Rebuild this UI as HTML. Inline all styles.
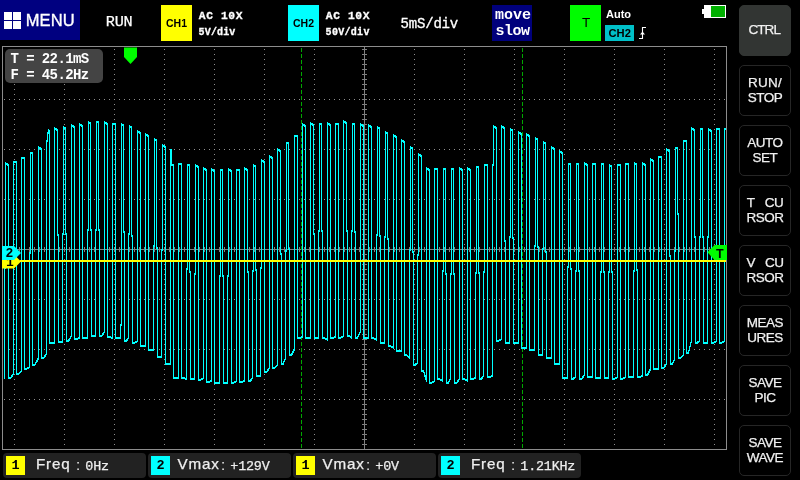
<!DOCTYPE html>
<html><head><meta charset="utf-8"><title>Scope</title>
<style>
html,body{margin:0;padding:0;background:#000;}
body{width:800px;height:480px;position:relative;overflow:hidden;font-family:"Liberation Sans",sans-serif;color:#fff;}
.abs{position:absolute;white-space:pre;line-height:1;}
.mono{font-family:"Liberation Mono",monospace;}
.menu{position:absolute;left:0;top:0;width:80px;height:40px;background:#000080;}
.menu i{position:absolute;width:8px;height:8px;background:#fff;}
.chbox{position:absolute;top:5px;height:35.5px;width:31px;}
.btn{position:absolute;left:739px;width:50px;height:49px;border:1px solid #262626;border-radius:5px;background:#000;display:flex;align-items:center;justify-content:center;text-align:center;font-size:13.5px;line-height:15px;color:#f0f0f0;letter-spacing:-0.5px;-webkit-text-stroke:0.25px #f0f0f0}
.btn.first{background:#323533;border-color:#323533;}
.btn span{display:block;position:relative;top:-0.7px}
.mbox{position:absolute;top:453px;width:142.5px;height:24.5px;background:#222;border-radius:4px;}
.sq{position:absolute;left:3px;top:3px;width:19px;height:19px;color:#000;font-family:"Liberation Mono",monospace;font-weight:bold;font-size:13.5px;line-height:19px;text-align:center;}
.sq.y{background:#ffff00}.sq.c{background:#00ffff}
.lab{position:absolute;top:2.2px;font-size:15.2px;line-height:17px;letter-spacing:0.8px;color:#eee;white-space:pre;-webkit-text-stroke:0.25px #eee}
.colon{position:absolute;left:73px;top:3px;font-size:15px;line-height:17px;color:#eee}
.val{position:absolute;left:82.3px;top:6px;font-family:"Liberation Mono",monospace;font-size:13.4px;letter-spacing:-0.2px;line-height:15px;color:#eee;white-space:pre;-webkit-text-stroke:0.25px #eee}
</style></head><body><div id="root" style="position:absolute;left:0;top:0;width:800px;height:480px;will-change:transform">
<svg width="800" height="480" viewBox="0 0 800 480" style="position:absolute;left:0;top:0">
<rect x="2.5" y="46.5" width="724" height="403" fill="none" stroke="#8c8c8c" stroke-width="1" shape-rendering="crispEdges"/>
<g stroke="#909090" stroke-width="1" stroke-dasharray="1 4" shape-rendering="crispEdges"><line x1="14.5" y1="49" x2="14.5" y2="445" /><line x1="64.5" y1="49" x2="64.5" y2="445" /><line x1="114.5" y1="49" x2="114.5" y2="445" /><line x1="164.5" y1="49" x2="164.5" y2="445" /><line x1="214.5" y1="49" x2="214.5" y2="445" /><line x1="264.5" y1="49" x2="264.5" y2="445" /><line x1="314.5" y1="49" x2="314.5" y2="445" /><line x1="414.5" y1="49" x2="414.5" y2="445" /><line x1="464.5" y1="49" x2="464.5" y2="445" /><line x1="514.5" y1="49" x2="514.5" y2="445" /><line x1="564.5" y1="49" x2="564.5" y2="445" /><line x1="614.5" y1="49" x2="614.5" y2="445" /><line x1="664.5" y1="49" x2="664.5" y2="445" /><line x1="714.5" y1="49" x2="714.5" y2="445" /><line x1="4" y1="99.5" x2="725" y2="99.5" /><line x1="4" y1="149.5" x2="725" y2="149.5" /><line x1="4" y1="199.5" x2="725" y2="199.5" /><line x1="4" y1="299.5" x2="725" y2="299.5" /><line x1="4" y1="349.5" x2="725" y2="349.5" /><line x1="4" y1="399.5" x2="725" y2="399.5" /></g>
<g stroke="#808080" stroke-width="1" shape-rendering="crispEdges">
<line x1="364.5" y1="47" x2="364.5" y2="449"/><line x1="3" y1="249.5" x2="726" y2="249.5"/>
</g>
<g stroke="#808080" stroke-width="5" stroke-dasharray="1 4" shape-rendering="crispEdges">
<line x1="364.5" y1="49" x2="364.5" y2="445"/><line x1="4" y1="249.5" x2="725" y2="249.5"/>
</g>
<g stroke="#00a800" stroke-width="1" stroke-dasharray="4 2" shape-rendering="crispEdges">
<line x1="301.5" y1="48" x2="301.5" y2="449"/><line x1="522.5" y1="48" x2="522.5" y2="449"/></g>
<path id="w" d="M4.5,377.5 L4.5,267.5 L5.5,267.5 L5.5,162.5 L6.5,163.5 L8.5,164.5 L8.5,377.5 L10.5,377.5 L13.5,373.5 L13.5,373.5 L13.5,161.5 L16.5,161.5 L16.5,373.5 L18.5,373.5 L21.5,370.5 L21.5,370.5 L21.5,157.5 L24.5,157.5 L24.5,368.5 L26.5,368.5 L29.5,366.5 L29.5,366.5 L29.5,252.5 L30.5,252.5 L30.5,152.5 L32.5,152.5 L32.5,364.5 L34.9,364.5 L38.5,357.5 L38.5,357.5 L38.5,146.5 L39.5,147.5 L41.5,148.5 L41.5,357.5 L43.5,357.5 L46.5,353.5 L46.5,353.5 L46.5,140.5 L47.5,140.5 L47.5,132.5 L48.5,132.5 L48.5,129.5 L48.5,129.5 L49.5,130.5 L49.5,131.5 L49.5,342.5 L54.5,342.5 L54.5,342.5 L54.5,127.5 L55.5,128.5 L57.5,129.5 L57.5,234.5 L58.5,234.5 L58.5,341.5 L62.5,341.5 L62.5,341.5 L62.5,233.5 L63.5,233.5 L63.5,126.5 L64.5,127.5 L65.5,127.5 L65.5,233.5 L66.5,233.5 L66.5,340.5 L68.5,340.5 L71.5,335.5 L71.5,335.5 L71.5,124.5 L72.5,125.5 L74.5,126.5 L74.5,338.5 L76.5,338.5 L79.5,337.5 L79.5,337.5 L79.5,123.5 L80.5,124.5 L82.5,125.5 L82.5,337.5 L87.5,337.5 L87.5,337.5 L87.5,229.5 L88.5,229.5 L88.5,121.5 L89.5,122.5 L90.5,122.5 L90.5,229.5 L91.5,229.5 L91.5,335.5 L95.5,335.5 L95.5,335.5 L95.5,229.5 L96.5,229.5 L96.5,121.5 L98.5,121.5 L98.5,229.5 L99.5,229.5 L99.5,335.5 L101.5,335.5 L104.5,331.5 L104.5,331.5 L104.5,121.5 L105.5,122.5 L107.5,123.5 L107.5,336.5 L109.5,336.5 L112.5,337.5 L112.5,337.5 L112.5,123.5 L115.5,123.5 L115.5,337.5 L120.5,337.5 L120.5,337.5 L120.5,324.5 L121.5,324.5 L121.5,123.5 L122.5,124.5 L123.5,124.5 L123.5,231.5 L124.5,231.5 L124.5,340.5 L126.1,340.5 L128.5,337.5 L128.5,337.5 L128.5,233.5 L129.5,233.5 L129.5,125.5 L130.5,126.5 L131.5,126.5 L131.5,235.5 L132.5,235.5 L132.5,342.5 L134.5,342.5 L137.5,340.5 L137.5,340.5 L137.5,130.5 L138.5,131.5 L140.5,132.5 L140.5,345.5 L145.5,345.5 L145.5,345.5 L145.5,133.5 L146.5,134.5 L148.5,135.5 L148.5,349.5 L153.5,349.5 L153.5,349.5 L153.5,245.5 L154.5,245.5 L154.5,138.5 L155.5,139.5 L156.5,139.5 L156.5,247.5 L157.5,247.5 L157.5,356.5 L161.5,356.5 L161.5,356.5 L161.5,249.5 L162.5,249.5 L162.5,144.5 L163.5,145.5 L165.5,146.5 L165.5,363.5 L170.5,363.5 L170.5,363.5 L170.5,149.5 L171.5,149.5 L171.5,164.5 L173.5,164.5 L173.5,377.5 L178.5,377.5 L178.5,377.5 L178.5,163.5 L181.5,163.5 L181.5,377.5 L183.5,377.5 L186.5,378.5 L186.5,378.5 L186.5,268.5 L187.5,268.5 L187.5,164.5 L189.5,164.5 L189.5,271.5 L190.5,271.5 L190.5,378.5 L194.5,378.5 L194.5,378.5 L194.5,273.5 L195.5,273.5 L195.5,164.5 L196.5,165.5 L198.5,166.5 L198.5,379.5 L200.5,379.5 L203.5,377.5 L203.5,377.5 L203.5,167.5 L204.5,168.5 L206.5,169.5 L206.5,381.5 L208.5,381.5 L211.5,380.5 L211.5,380.5 L211.5,168.5 L212.5,169.5 L214.5,170.5 L214.5,382.5 L219.5,382.5 L219.5,382.5 L219.5,275.5 L220.5,275.5 L220.5,169.5 L222.5,169.5 L222.5,275.5 L223.5,275.5 L223.5,382.5 L227.5,382.5 L227.5,382.5 L227.5,275.5 L228.5,275.5 L228.5,168.5 L229.5,169.5 L231.5,170.5 L231.5,382.5 L233.5,382.5 L236.5,380.5 L236.5,380.5 L236.5,169.5 L239.5,169.5 L239.5,381.5 L241.5,381.5 L244.5,380.5 L244.5,380.5 L244.5,167.5 L245.5,168.5 L247.5,169.5 L247.5,271.5 L248.5,271.5 L248.5,380.5 L250.1,380.5 L252.5,377.5 L252.5,377.5 L252.5,270.5 L253.5,270.5 L253.5,164.5 L254.5,165.5 L255.5,165.5 L255.5,269.5 L256.5,269.5 L256.5,375.5 L260.5,375.5 L260.5,375.5 L260.5,267.5 L261.5,267.5 L261.5,159.5 L262.5,160.5 L264.5,161.5 L264.5,371.5 L266.5,371.5 L269.5,367.5 L269.5,367.5 L269.5,155.5 L270.5,156.5 L272.5,157.5 L272.5,367.5 L274.5,367.5 L277.5,364.5 L277.5,364.5 L277.5,148.5 L278.5,149.5 L280.5,150.5 L280.5,253.5 L281.5,253.5 L281.5,363.5 L283.1,363.5 L285.5,357.5 L285.5,357.5 L285.5,250.5 L286.5,250.5 L286.5,142.5 L288.5,142.5 L288.5,248.5 L289.5,248.5 L289.5,354.5 L291.5,354.5 L294.5,348.5 L294.5,348.5 L294.5,135.5 L297.5,135.5 L297.5,337.5 L299.5,337.5 L302.5,336.5 L302.5,336.5 L302.5,123.5 L303.5,124.5 L305.5,125.5 L305.5,337.5 L310.5,337.5 L310.5,337.5 L310.5,122.5 L311.5,123.5 L313.5,124.5 L313.5,233.5 L314.5,233.5 L314.5,337.5 L318.5,337.5 L318.5,337.5 L318.5,230.5 L319.5,230.5 L319.5,123.5 L321.5,123.5 L321.5,230.5 L322.5,230.5 L322.5,337.5 L324.5,337.5 L327.5,339.5 L327.5,339.5 L327.5,122.5 L328.5,123.5 L330.5,124.5 L330.5,337.5 L332.5,337.5 L335.5,336.5 L335.5,336.5 L335.5,123.5 L338.5,123.5 L338.5,337.5 L340.5,337.5 L343.5,335.5 L343.5,335.5 L343.5,120.5 L344.5,121.5 L346.5,122.5 L346.5,230.5 L347.5,230.5 L347.5,335.5 L349.1,335.5 L351.5,337.5 L351.5,337.5 L351.5,230.5 L352.5,230.5 L352.5,123.5 L354.5,123.5 L354.5,231.5 L355.5,231.5 L355.5,337.5 L357.5,337.5 L360.5,330.5 L360.5,330.5 L360.5,123.5 L361.5,124.5 L363.5,125.5 L363.5,337.5 L368.5,337.5 L368.5,337.5 L368.5,124.5 L369.5,125.5 L371.5,126.5 L371.5,337.5 L373.5,337.5 L376.5,339.5 L376.5,339.5 L376.5,234.5 L377.5,234.5 L377.5,126.5 L378.5,127.5 L379.5,127.5 L379.5,235.5 L380.5,235.5 L380.5,342.5 L384.5,342.5 L384.5,342.5 L384.5,236.5 L385.5,236.5 L385.5,131.5 L386.5,132.5 L387.5,132.5 L387.5,238.5 L388.5,238.5 L388.5,345.5 L390.5,345.5 L393.5,347.5 L393.5,347.5 L393.5,134.5 L394.5,135.5 L396.5,136.5 L396.5,350.5 L401.5,350.5 L401.5,350.5 L401.5,139.5 L402.5,140.5 L404.5,141.5 L404.5,354.5 L406.5,354.5 L409.5,357.5 L409.5,357.5 L409.5,249.5 L410.5,249.5 L410.5,146.5 L411.5,147.5 L412.5,147.5 L412.5,251.5 L413.5,251.5 L413.5,364.5 L415.1,364.5 L417.5,362.5 L417.5,362.5 L417.5,254.5 L418.5,254.5 L418.5,153.5 L419.5,154.5 L421.5,155.5 L421.5,370.5 L423.5,370.5 L426.5,380.5 L426.5,380.5 L426.5,167.5 L427.5,168.5 L429.5,169.5 L429.5,382.5 L431.5,382.5 L434.5,380.5 L434.5,380.5 L434.5,168.5 L437.5,168.5 L437.5,378.5 L439.5,378.5 L442.5,380.5 L442.5,380.5 L442.5,270.5 L443.5,270.5 L443.5,168.5 L445.5,168.5 L445.5,273.5 L446.5,273.5 L446.5,382.5 L448.1,382.5 L450.5,378.5 L450.5,378.5 L450.5,273.5 L451.5,273.5 L451.5,168.5 L453.5,168.5 L453.5,273.5 L454.5,273.5 L454.5,382.5 L456.5,382.5 L459.5,378.5 L459.5,378.5 L459.5,167.5 L460.5,168.5 L462.5,169.5 L462.5,378.5 L464.5,378.5 L467.5,380.5 L467.5,380.5 L467.5,167.5 L468.5,168.5 L470.5,169.5 L470.5,378.5 L472.5,378.5 L475.5,377.5 L475.5,377.5 L475.5,272.5 L476.5,272.5 L476.5,166.5 L478.5,166.5 L478.5,272.5 L479.5,272.5 L479.5,378.5 L481.1,378.5 L483.5,375.5 L483.5,375.5 L483.5,271.5 L484.5,271.5 L484.5,164.5 L487.5,164.5 L487.5,376.5 L489.5,376.5 L492.5,375.5 L492.5,375.5 L492.5,164.5 L493.5,164.5 L493.5,125.5 L494.5,126.5 L496.5,127.5 L496.5,340.5 L498.5,340.5 L501.5,338.5 L501.5,338.5 L501.5,125.5 L502.5,126.5 L504.5,127.5 L504.5,240.5 L505.5,240.5 L505.5,342.5 L509.5,342.5 L509.5,342.5 L509.5,236.5 L510.5,236.5 L510.5,128.5 L511.5,129.5 L512.5,129.5 L512.5,237.5 L513.5,237.5 L513.5,342.5 L518.5,342.5 L518.5,342.5 L518.5,131.5 L519.5,132.5 L521.5,133.5 L521.5,347.5 L526.5,347.5 L526.5,347.5 L526.5,133.5 L527.5,134.5 L529.5,135.5 L529.5,349.5 L534.5,349.5 L534.5,349.5 L534.5,245.5 L535.5,245.5 L535.5,137.5 L536.5,138.5 L537.5,138.5 L537.5,246.5 L538.5,246.5 L538.5,354.5 L542.5,354.5 L542.5,354.5 L542.5,248.5 L543.5,248.5 L543.5,141.5 L544.5,142.5 L545.5,142.5 L545.5,251.5 L546.5,251.5 L546.5,357.5 L551.5,357.5 L551.5,357.5 L551.5,146.5 L552.5,147.5 L554.5,148.5 L554.5,363.5 L559.5,363.5 L559.5,363.5 L559.5,150.5 L560.5,151.5 L562.5,152.5 L562.5,377.5 L567.5,377.5 L567.5,377.5 L567.5,266.5 L568.5,266.5 L568.5,163.5 L570.5,163.5 L570.5,268.5 L571.5,268.5 L571.5,378.5 L573.1,378.5 L575.5,376.5 L575.5,376.5 L575.5,270.5 L576.5,270.5 L576.5,163.5 L578.5,163.5 L578.5,270.5 L579.5,270.5 L579.5,378.5 L581.5,378.5 L584.5,374.5 L584.5,374.5 L584.5,162.5 L585.5,163.5 L587.5,164.5 L587.5,376.5 L592.5,376.5 L592.5,376.5 L592.5,163.5 L595.5,163.5 L595.5,377.5 L600.5,377.5 L600.5,377.5 L600.5,271.5 L601.5,271.5 L601.5,163.5 L603.5,163.5 L603.5,271.5 L604.5,271.5 L604.5,377.5 L608.5,377.5 L608.5,377.5 L608.5,271.5 L609.5,271.5 L609.5,164.5 L610.5,165.5 L611.5,165.5 L611.5,271.5 L612.5,271.5 L612.5,378.5 L614.5,378.5 L617.5,376.5 L617.5,376.5 L617.5,164.5 L620.5,164.5 L620.5,378.5 L622.5,378.5 L625.5,376.5 L625.5,376.5 L625.5,163.5 L628.5,163.5 L628.5,376.5 L633.5,376.5 L633.5,376.5 L633.5,270.5 L634.5,270.5 L634.5,162.5 L635.5,163.5 L636.5,163.5 L636.5,269.5 L637.5,269.5 L637.5,376.5 L639.5,376.5 L642.5,375.5 L642.5,375.5 L642.5,162.5 L643.5,163.5 L645.5,164.5 L645.5,374.5 L647.5,374.5 L650.5,368.5 L650.5,368.5 L650.5,158.5 L651.5,159.5 L653.5,160.5 L653.5,368.5 L658.5,368.5 L658.5,368.5 L658.5,156.5 L661.5,156.5 L661.5,367.5 L663.5,367.5 L666.5,363.5 L666.5,363.5 L666.5,148.5 L667.5,149.5 L669.5,150.5 L669.5,255.5 L670.5,255.5 L670.5,363.5 L672.1,363.5 L674.5,359.5 L674.5,359.5 L674.5,250.5 L675.5,250.5 L675.5,147.5 L677.5,147.5 L677.5,213.5 L678.5,213.5 L678.5,357.5 L680.5,357.5 L683.5,354.5 L683.5,354.5 L683.5,140.5 L686.5,140.5 L686.5,352.5 L688.5,352.5 L691.5,340.5 L691.5,340.5 L691.5,127.5 L692.5,128.5 L694.5,129.5 L694.5,236.5 L695.5,236.5 L695.5,342.5 L697.1,342.5 L699.5,340.5 L699.5,340.5 L699.5,236.5 L700.5,236.5 L700.5,128.5 L702.5,128.5 L702.5,236.5 L703.5,236.5 L703.5,342.5 L707.5,342.5 L707.5,342.5 L707.5,236.5 L708.5,236.5 L708.5,128.5 L709.5,129.5 L711.5,130.5 L711.5,342.5 L713.5,342.5 L716.5,340.5 L716.5,340.5 L716.5,128.5 L719.5,128.5 L719.5,342.5 L721.5,342.5 L724.5,340.5 L724.5,340.5 L724.5,128.5 L726.0,128.5" fill="none" stroke="#00ffff" stroke-width="1" stroke-linejoin="miter" shape-rendering="crispEdges"/>
<path d="M4.5,377.5 L4.5,267.5 L5.5,267.5 L5.5,162.5 L6.5,163.5 L8.5,164.5 L8.5,377.5 L10.5,377.5 L13.5,373.5 L13.5,373.5 L13.5,161.5 L16.5,161.5 L16.5,373.5 L18.5,373.5 L21.5,370.5 L21.5,370.5 L21.5,157.5 L24.5,157.5 L24.5,368.5 L26.5,368.5 L29.5,366.5 L29.5,366.5 L29.5,252.5 L30.5,252.5 L30.5,152.5 L32.5,152.5 L32.5,364.5 L34.9,364.5 L38.5,357.5 L38.5,357.5 L38.5,146.5 L39.5,147.5 L41.5,148.5 L41.5,357.5 L43.5,357.5 L46.5,353.5 L46.5,353.5 L46.5,140.5 L47.5,140.5 L47.5,132.5 L48.5,132.5 L48.5,129.5 L48.5,129.5 L49.5,130.5 L49.5,131.5 L49.5,342.5 L54.5,342.5 L54.5,342.5 L54.5,127.5 L55.5,128.5 L57.5,129.5 L57.5,234.5 L58.5,234.5 L58.5,341.5 L62.5,341.5 L62.5,341.5 L62.5,233.5 L63.5,233.5 L63.5,126.5 L64.5,127.5 L65.5,127.5 L65.5,233.5 L66.5,233.5 L66.5,340.5 L68.5,340.5 L71.5,335.5 L71.5,335.5 L71.5,124.5 L72.5,125.5 L74.5,126.5 L74.5,338.5 L76.5,338.5 L79.5,337.5 L79.5,337.5 L79.5,123.5 L80.5,124.5 L82.5,125.5 L82.5,337.5 L87.5,337.5 L87.5,337.5 L87.5,229.5 L88.5,229.5 L88.5,121.5 L89.5,122.5 L90.5,122.5 L90.5,229.5 L91.5,229.5 L91.5,335.5 L95.5,335.5 L95.5,335.5 L95.5,229.5 L96.5,229.5 L96.5,121.5 L98.5,121.5 L98.5,229.5 L99.5,229.5 L99.5,335.5 L101.5,335.5 L104.5,331.5 L104.5,331.5 L104.5,121.5 L105.5,122.5 L107.5,123.5 L107.5,336.5 L109.5,336.5 L112.5,337.5 L112.5,337.5 L112.5,123.5 L115.5,123.5 L115.5,337.5 L120.5,337.5 L120.5,337.5 L120.5,324.5 L121.5,324.5 L121.5,123.5 L122.5,124.5 L123.5,124.5 L123.5,231.5 L124.5,231.5 L124.5,340.5 L126.1,340.5 L128.5,337.5 L128.5,337.5 L128.5,233.5 L129.5,233.5 L129.5,125.5 L130.5,126.5 L131.5,126.5 L131.5,235.5 L132.5,235.5 L132.5,342.5 L134.5,342.5 L137.5,340.5 L137.5,340.5 L137.5,130.5 L138.5,131.5 L140.5,132.5 L140.5,345.5 L145.5,345.5 L145.5,345.5 L145.5,133.5 L146.5,134.5 L148.5,135.5 L148.5,349.5 L153.5,349.5 L153.5,349.5 L153.5,245.5 L154.5,245.5 L154.5,138.5 L155.5,139.5 L156.5,139.5 L156.5,247.5 L157.5,247.5 L157.5,356.5 L161.5,356.5 L161.5,356.5 L161.5,249.5 L162.5,249.5 L162.5,144.5 L163.5,145.5 L165.5,146.5 L165.5,363.5 L170.5,363.5 L170.5,363.5 L170.5,149.5 L171.5,149.5 L171.5,164.5 L173.5,164.5 L173.5,377.5 L178.5,377.5 L178.5,377.5 L178.5,163.5 L181.5,163.5 L181.5,377.5 L183.5,377.5 L186.5,378.5 L186.5,378.5 L186.5,268.5 L187.5,268.5 L187.5,164.5 L189.5,164.5 L189.5,271.5 L190.5,271.5 L190.5,378.5 L194.5,378.5 L194.5,378.5 L194.5,273.5 L195.5,273.5 L195.5,164.5 L196.5,165.5 L198.5,166.5 L198.5,379.5 L200.5,379.5 L203.5,377.5 L203.5,377.5 L203.5,167.5 L204.5,168.5 L206.5,169.5 L206.5,381.5 L208.5,381.5 L211.5,380.5 L211.5,380.5 L211.5,168.5 L212.5,169.5 L214.5,170.5 L214.5,382.5 L219.5,382.5 L219.5,382.5 L219.5,275.5 L220.5,275.5 L220.5,169.5 L222.5,169.5 L222.5,275.5 L223.5,275.5 L223.5,382.5 L227.5,382.5 L227.5,382.5 L227.5,275.5 L228.5,275.5 L228.5,168.5 L229.5,169.5 L231.5,170.5 L231.5,382.5 L233.5,382.5 L236.5,380.5 L236.5,380.5 L236.5,169.5 L239.5,169.5 L239.5,381.5 L241.5,381.5 L244.5,380.5 L244.5,380.5 L244.5,167.5 L245.5,168.5 L247.5,169.5 L247.5,271.5 L248.5,271.5 L248.5,380.5 L250.1,380.5 L252.5,377.5 L252.5,377.5 L252.5,270.5 L253.5,270.5 L253.5,164.5 L254.5,165.5 L255.5,165.5 L255.5,269.5 L256.5,269.5 L256.5,375.5 L260.5,375.5 L260.5,375.5 L260.5,267.5 L261.5,267.5 L261.5,159.5 L262.5,160.5 L264.5,161.5 L264.5,371.5 L266.5,371.5 L269.5,367.5 L269.5,367.5 L269.5,155.5 L270.5,156.5 L272.5,157.5 L272.5,367.5 L274.5,367.5 L277.5,364.5 L277.5,364.5 L277.5,148.5 L278.5,149.5 L280.5,150.5 L280.5,253.5 L281.5,253.5 L281.5,363.5 L283.1,363.5 L285.5,357.5 L285.5,357.5 L285.5,250.5 L286.5,250.5 L286.5,142.5 L288.5,142.5 L288.5,248.5 L289.5,248.5 L289.5,354.5 L291.5,354.5 L294.5,348.5 L294.5,348.5 L294.5,135.5 L297.5,135.5 L297.5,337.5 L299.5,337.5 L302.5,336.5 L302.5,336.5 L302.5,123.5 L303.5,124.5 L305.5,125.5 L305.5,337.5 L310.5,337.5 L310.5,337.5 L310.5,122.5 L311.5,123.5 L313.5,124.5 L313.5,233.5 L314.5,233.5 L314.5,337.5 L318.5,337.5 L318.5,337.5 L318.5,230.5 L319.5,230.5 L319.5,123.5 L321.5,123.5 L321.5,230.5 L322.5,230.5 L322.5,337.5 L324.5,337.5 L327.5,339.5 L327.5,339.5 L327.5,122.5 L328.5,123.5 L330.5,124.5 L330.5,337.5 L332.5,337.5 L335.5,336.5 L335.5,336.5 L335.5,123.5 L338.5,123.5 L338.5,337.5 L340.5,337.5 L343.5,335.5 L343.5,335.5 L343.5,120.5 L344.5,121.5 L346.5,122.5 L346.5,230.5 L347.5,230.5 L347.5,335.5 L349.1,335.5 L351.5,337.5 L351.5,337.5 L351.5,230.5 L352.5,230.5 L352.5,123.5 L354.5,123.5 L354.5,231.5 L355.5,231.5 L355.5,337.5 L357.5,337.5 L360.5,330.5 L360.5,330.5 L360.5,123.5 L361.5,124.5 L363.5,125.5 L363.5,337.5 L368.5,337.5 L368.5,337.5 L368.5,124.5 L369.5,125.5 L371.5,126.5 L371.5,337.5 L373.5,337.5 L376.5,339.5 L376.5,339.5 L376.5,234.5 L377.5,234.5 L377.5,126.5 L378.5,127.5 L379.5,127.5 L379.5,235.5 L380.5,235.5 L380.5,342.5 L384.5,342.5 L384.5,342.5 L384.5,236.5 L385.5,236.5 L385.5,131.5 L386.5,132.5 L387.5,132.5 L387.5,238.5 L388.5,238.5 L388.5,345.5 L390.5,345.5 L393.5,347.5 L393.5,347.5 L393.5,134.5 L394.5,135.5 L396.5,136.5 L396.5,350.5 L401.5,350.5 L401.5,350.5 L401.5,139.5 L402.5,140.5 L404.5,141.5 L404.5,354.5 L406.5,354.5 L409.5,357.5 L409.5,357.5 L409.5,249.5 L410.5,249.5 L410.5,146.5 L411.5,147.5 L412.5,147.5 L412.5,251.5 L413.5,251.5 L413.5,364.5 L415.1,364.5 L417.5,362.5 L417.5,362.5 L417.5,254.5 L418.5,254.5 L418.5,153.5 L419.5,154.5 L421.5,155.5 L421.5,370.5 L423.5,370.5 L426.5,380.5 L426.5,380.5 L426.5,167.5 L427.5,168.5 L429.5,169.5 L429.5,382.5 L431.5,382.5 L434.5,380.5 L434.5,380.5 L434.5,168.5 L437.5,168.5 L437.5,378.5 L439.5,378.5 L442.5,380.5 L442.5,380.5 L442.5,270.5 L443.5,270.5 L443.5,168.5 L445.5,168.5 L445.5,273.5 L446.5,273.5 L446.5,382.5 L448.1,382.5 L450.5,378.5 L450.5,378.5 L450.5,273.5 L451.5,273.5 L451.5,168.5 L453.5,168.5 L453.5,273.5 L454.5,273.5 L454.5,382.5 L456.5,382.5 L459.5,378.5 L459.5,378.5 L459.5,167.5 L460.5,168.5 L462.5,169.5 L462.5,378.5 L464.5,378.5 L467.5,380.5 L467.5,380.5 L467.5,167.5 L468.5,168.5 L470.5,169.5 L470.5,378.5 L472.5,378.5 L475.5,377.5 L475.5,377.5 L475.5,272.5 L476.5,272.5 L476.5,166.5 L478.5,166.5 L478.5,272.5 L479.5,272.5 L479.5,378.5 L481.1,378.5 L483.5,375.5 L483.5,375.5 L483.5,271.5 L484.5,271.5 L484.5,164.5 L487.5,164.5 L487.5,376.5 L489.5,376.5 L492.5,375.5 L492.5,375.5 L492.5,164.5 L493.5,164.5 L493.5,125.5 L494.5,126.5 L496.5,127.5 L496.5,340.5 L498.5,340.5 L501.5,338.5 L501.5,338.5 L501.5,125.5 L502.5,126.5 L504.5,127.5 L504.5,240.5 L505.5,240.5 L505.5,342.5 L509.5,342.5 L509.5,342.5 L509.5,236.5 L510.5,236.5 L510.5,128.5 L511.5,129.5 L512.5,129.5 L512.5,237.5 L513.5,237.5 L513.5,342.5 L518.5,342.5 L518.5,342.5 L518.5,131.5 L519.5,132.5 L521.5,133.5 L521.5,347.5 L526.5,347.5 L526.5,347.5 L526.5,133.5 L527.5,134.5 L529.5,135.5 L529.5,349.5 L534.5,349.5 L534.5,349.5 L534.5,245.5 L535.5,245.5 L535.5,137.5 L536.5,138.5 L537.5,138.5 L537.5,246.5 L538.5,246.5 L538.5,354.5 L542.5,354.5 L542.5,354.5 L542.5,248.5 L543.5,248.5 L543.5,141.5 L544.5,142.5 L545.5,142.5 L545.5,251.5 L546.5,251.5 L546.5,357.5 L551.5,357.5 L551.5,357.5 L551.5,146.5 L552.5,147.5 L554.5,148.5 L554.5,363.5 L559.5,363.5 L559.5,363.5 L559.5,150.5 L560.5,151.5 L562.5,152.5 L562.5,377.5 L567.5,377.5 L567.5,377.5 L567.5,266.5 L568.5,266.5 L568.5,163.5 L570.5,163.5 L570.5,268.5 L571.5,268.5 L571.5,378.5 L573.1,378.5 L575.5,376.5 L575.5,376.5 L575.5,270.5 L576.5,270.5 L576.5,163.5 L578.5,163.5 L578.5,270.5 L579.5,270.5 L579.5,378.5 L581.5,378.5 L584.5,374.5 L584.5,374.5 L584.5,162.5 L585.5,163.5 L587.5,164.5 L587.5,376.5 L592.5,376.5 L592.5,376.5 L592.5,163.5 L595.5,163.5 L595.5,377.5 L600.5,377.5 L600.5,377.5 L600.5,271.5 L601.5,271.5 L601.5,163.5 L603.5,163.5 L603.5,271.5 L604.5,271.5 L604.5,377.5 L608.5,377.5 L608.5,377.5 L608.5,271.5 L609.5,271.5 L609.5,164.5 L610.5,165.5 L611.5,165.5 L611.5,271.5 L612.5,271.5 L612.5,378.5 L614.5,378.5 L617.5,376.5 L617.5,376.5 L617.5,164.5 L620.5,164.5 L620.5,378.5 L622.5,378.5 L625.5,376.5 L625.5,376.5 L625.5,163.5 L628.5,163.5 L628.5,376.5 L633.5,376.5 L633.5,376.5 L633.5,270.5 L634.5,270.5 L634.5,162.5 L635.5,163.5 L636.5,163.5 L636.5,269.5 L637.5,269.5 L637.5,376.5 L639.5,376.5 L642.5,375.5 L642.5,375.5 L642.5,162.5 L643.5,163.5 L645.5,164.5 L645.5,374.5 L647.5,374.5 L650.5,368.5 L650.5,368.5 L650.5,158.5 L651.5,159.5 L653.5,160.5 L653.5,368.5 L658.5,368.5 L658.5,368.5 L658.5,156.5 L661.5,156.5 L661.5,367.5 L663.5,367.5 L666.5,363.5 L666.5,363.5 L666.5,148.5 L667.5,149.5 L669.5,150.5 L669.5,255.5 L670.5,255.5 L670.5,363.5 L672.1,363.5 L674.5,359.5 L674.5,359.5 L674.5,250.5 L675.5,250.5 L675.5,147.5 L677.5,147.5 L677.5,213.5 L678.5,213.5 L678.5,357.5 L680.5,357.5 L683.5,354.5 L683.5,354.5 L683.5,140.5 L686.5,140.5 L686.5,352.5 L688.5,352.5 L691.5,340.5 L691.5,340.5 L691.5,127.5 L692.5,128.5 L694.5,129.5 L694.5,236.5 L695.5,236.5 L695.5,342.5 L697.1,342.5 L699.5,340.5 L699.5,340.5 L699.5,236.5 L700.5,236.5 L700.5,128.5 L702.5,128.5 L702.5,236.5 L703.5,236.5 L703.5,342.5 L707.5,342.5 L707.5,342.5 L707.5,236.5 L708.5,236.5 L708.5,128.5 L709.5,129.5 L711.5,130.5 L711.5,342.5 L713.5,342.5 L716.5,340.5 L716.5,340.5 L716.5,128.5 L719.5,128.5 L719.5,342.5 L721.5,342.5 L724.5,340.5 L724.5,340.5 L724.5,128.5 L726.0,128.5" transform="translate(0,1)" fill="none" stroke="#00ffff" stroke-width="1" stroke-linejoin="miter" shape-rendering="crispEdges"/>
<rect x="20" y="260" width="706" height="2" fill="#ffff00" shape-rendering="crispEdges"/>
<polygon points="2,254.5 14,254.5 21,261.5 14,268.5 2,268.5" fill="#ffff00"/>
<text x="6" y="266" font-family="Liberation Mono, monospace" font-weight="bold" font-size="13" fill="#000">1</text>
<polygon points="2,246 14,246 21,253 14,260 2,260" fill="#00ffff"/>
<text x="5.5" y="256.9" font-family="Liberation Mono, monospace" font-weight="bold" font-size="13" fill="#000">2</text>
<polygon points="727,245 714.5,245 707.5,252.3 714.5,260 727,260" fill="#00fc00"/>
<text x="716" y="257.6" font-family="Liberation Sans, sans-serif" font-weight="bold" font-size="12.5" fill="#000">T</text>
<polygon points="124,47.5 137,47.5 137,57 130.5,64 124,57" fill="#00fc00"/>
<path d="M639,38.5 H642.5 V27.5 H646" fill="none" stroke="#fff" stroke-width="1.1"/><polygon points="640,34.4 645,34.4 642.5,31.4" fill="#fff"/>
<rect x="702" y="9" width="3" height="5" fill="#fff"/><rect x="704" y="5" width="22" height="13" fill="#fff"/><rect x="711" y="6" width="14" height="11" fill="#00b000"/>
</svg>
<div class="menu"><i style="left:4px;top:12px"></i><i style="left:13px;top:12px"></i><i style="left:4px;top:21px"></i><i style="left:13px;top:21px"></i></div>
<div class="abs" style="left:25.7px;top:12px;font-size:16.5px;letter-spacing:0.1px;-webkit-text-stroke:0.35px #fff">MENU</div>
<div class="abs mono" style="left:105.8px;top:15px;font-size:15.2px;letter-spacing:-0.2px;-webkit-text-stroke:0.25px #fff">RUN</div>
<div class="chbox" style="left:161px;background:#ffff00"></div>
<div class="abs" style="left:166px;top:18.2px;font-size:10.5px;font-weight:bold;color:#000">CH1</div>
<div class="abs mono" style="left:198.8px;top:10.6px;font-size:11.3px;font-weight:bold;letter-spacing:0.6px;-webkit-text-stroke:0.3px #fff">AC 10X</div>
<div class="abs mono" style="left:198.6px;top:27.6px;font-size:10px;font-weight:bold;letter-spacing:0.15px;-webkit-text-stroke:0.3px #fff">5V/div</div>
<div class="chbox" style="left:288px;background:#00ffff"></div>
<div class="abs" style="left:293px;top:18.2px;font-size:10.5px;font-weight:bold;color:#000">CH2</div>
<div class="abs mono" style="left:325.8px;top:10.6px;font-size:11.3px;font-weight:bold;letter-spacing:0.6px;-webkit-text-stroke:0.3px #fff">AC 10X</div>
<div class="abs mono" style="left:325.6px;top:27.6px;font-size:10px;font-weight:bold;letter-spacing:0.3px;-webkit-text-stroke:0.3px #fff">50V/div</div>
<div class="abs mono" style="left:400.6px;top:16.6px;font-size:14px;letter-spacing:-0.2px;-webkit-text-stroke:0.3px #fff">5mS/div</div>
<div class="chbox" style="left:492px;width:40px;background:#00007c"></div>
<div class="abs mono" style="left:495px;top:8px;font-size:15px;font-weight:bold;">move</div>
<div class="abs mono" style="left:495.5px;top:24.3px;font-size:15px;font-weight:bold;letter-spacing:-0.5px">slow</div>
<div class="chbox" style="left:570px;background:#00fc00"></div>
<div class="abs" style="left:582px;top:16px;font-size:13.5px;color:#000">T</div>
<div class="abs" style="left:606px;top:9px;font-size:11px;font-weight:bold;">Auto</div>
<div style="position:absolute;left:605px;top:25px;width:29px;height:15.5px;background:#00c0c8"></div>
<div class="abs" style="left:608.5px;top:27.7px;font-size:11.2px;font-weight:bold;color:#000">CH2</div>
<div style="position:absolute;left:5px;top:49px;width:98px;height:34px;background:#444;border-radius:5px"></div>
<div class="abs mono" style="left:10.6px;top:50.8px;font-size:14px;letter-spacing:-0.6px;font-weight:bold;line-height:16px">T = 22.1mS
F = 45.2Hz</div>
<div class="btn first" style="top:5px"><span><b style="font-weight:normal;letter-spacing:-0.9px;position:relative;left:-0.8px">CTRL</b></span></div>
<div class="btn" style="top:65px"><span><b style="font-weight:normal;letter-spacing:0.3px">RUN/</b><br>STOP</span></div>
<div class="btn" style="top:125px"><span>AUTO<br>SET</span></div>
<div class="btn" style="top:185px"><span><b style="font-weight:normal;white-space:pre;word-spacing:7.2px">T CU</b><br>RSOR</span></div>
<div class="btn" style="top:245px"><span><b style="font-weight:normal;white-space:pre;word-spacing:6.7px">V CU</b><br>RSOR</span></div>
<div class="btn" style="top:305px"><span>MEAS<br>URES</span></div>
<div class="btn" style="top:365px"><span>SAVE<br>PIC</span></div>
<div class="btn" style="top:425px"><span>SAVE<br>WAVE</span></div>
<div class="mbox" style="left:3px"><div class="sq y">1</div><div class="lab" style="left:33px">Freq</div><div class="colon">:</div><div class="val">0Hz</div></div>
<div class="mbox" style="left:148px"><div class="sq c">2</div><div class="lab" style="left:29.5px">Vmax</div><div class="colon">:</div><div class="val">+129V</div></div>
<div class="mbox" style="left:293px"><div class="sq y">1</div><div class="lab" style="left:29.5px">Vmax</div><div class="colon">:</div><div class="val">+0V</div></div>
<div class="mbox" style="left:438px"><div class="sq c">2</div><div class="lab" style="left:33px">Freq</div><div class="colon">:</div><div class="val">1.21KHz</div></div>
</div></body></html>
